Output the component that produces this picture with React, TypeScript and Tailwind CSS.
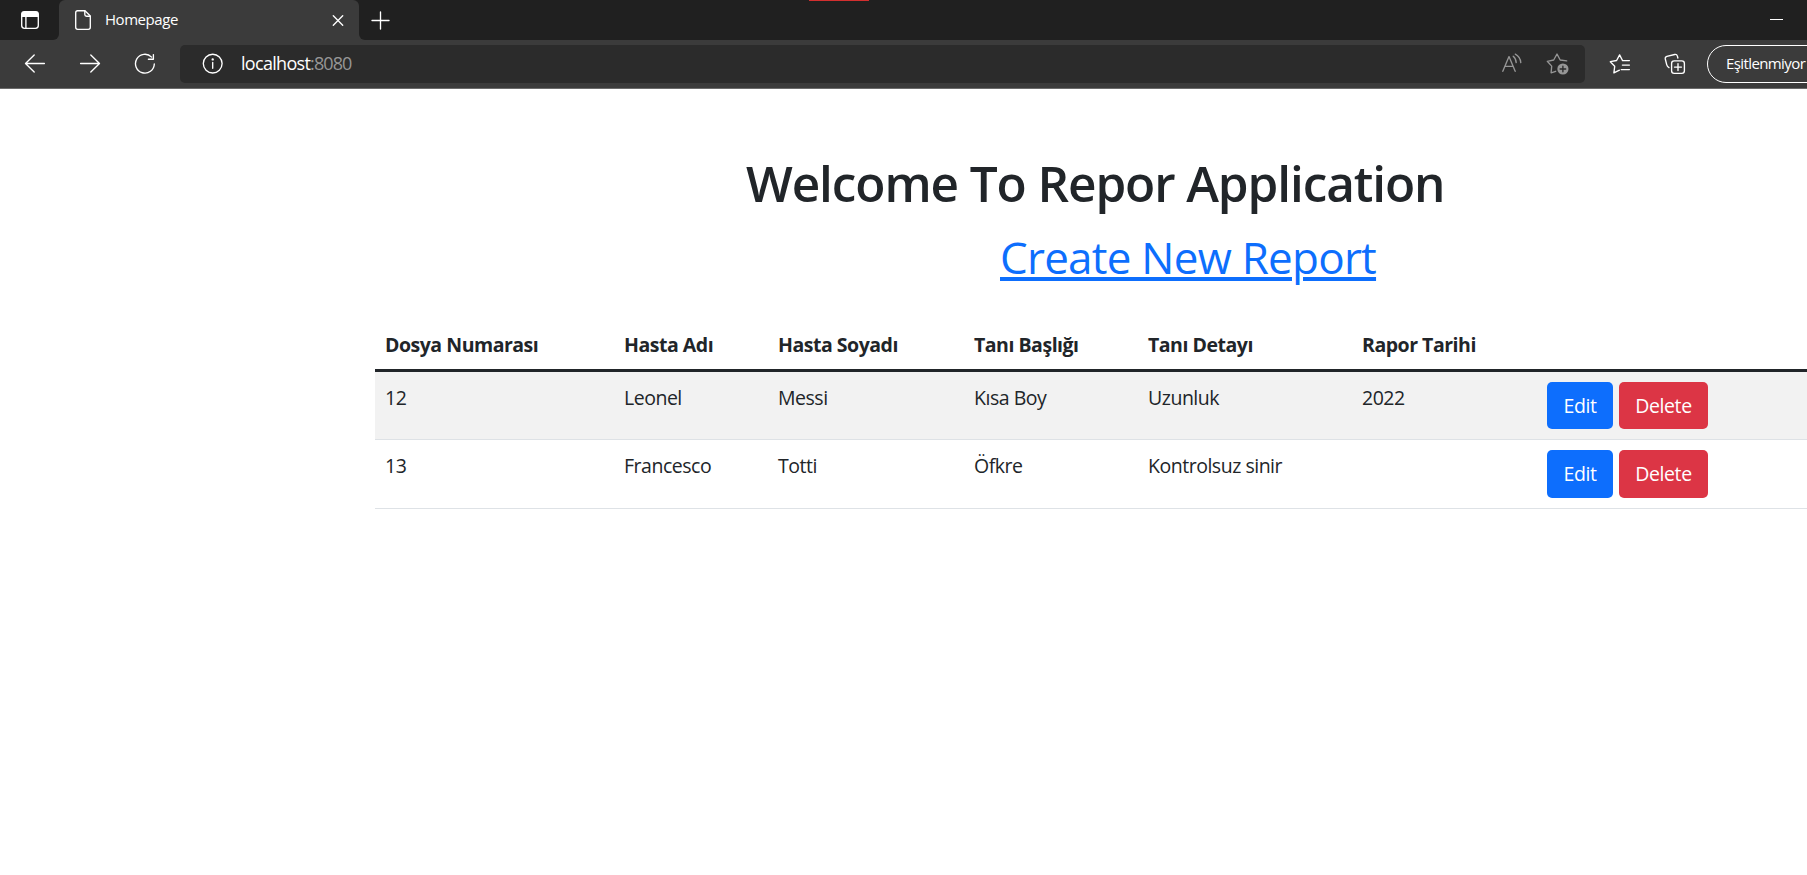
import type { ReactNode } from 'react';

type Report = {
  id: string;
  name: string;
  surname: string;
  title: string;
  detail: string;
  date: string;
};

const reports: Report[] = [
  { id: '12', name: 'Leonel', surname: 'Messi', title: 'Kısa Boy', detail: 'Uzunluk', date: '2022' },
  { id: '13', name: 'Francesco', surname: 'Totti', title: 'Öfkre', detail: 'Kontrolsuz sinir', date: '' },
];

const headers = ['Dosya Numarası', 'Hasta Adı', 'Hasta Soyadı', 'Tanı Başlığı', 'Tanı Detayı', 'Rapor Tarihi', ''];

function Icon({ children, className, box = '0 0 22 22' }: { children: ReactNode; className: string; box?: string }) {
  return (
    <svg
      viewBox={box}
      className={`shrink-0 ${className}`}
      fill="none"
      stroke="currentColor"
      strokeWidth="1.35"
      strokeLinecap="round"
      strokeLinejoin="round"
    >
      {children}
    </svg>
  );
}

function TabStrip() {
  return (
    <div className="flex h-10 bg-[#202020] text-white">
      <div className="w-[59px] bg-[#3b3b3b]">
        <div className="flex h-10 items-center rounded-br-md bg-[#202020] pl-5">
          <Icon className="size-5" box="0 0 20 20">
            <rect x="1.7" y="1.7" width="16.6" height="16.6" rx="2.8" />
            <path d="M1.5 7V4.2Q1.5 1.5 4.2 1.5H15.8Q18.5 1.5 18.5 4.2V7Z" fill="currentColor" stroke="none" />
            <path d="M5.9 7V18" />
          </Icon>
        </div>
      </div>
      <div className="w-[300px] bg-[#202020]">
        <div className="flex h-10 items-center rounded-t-md bg-[#3b3b3b] pr-[15px] pl-[13px]">
          <Icon className="size-[22px]">
            <path d="M5.2 1.7H13L18.3 7V18.3Q18.3 20.3 16.3 20.3H5.7Q3.7 20.3 3.7 18.3V3.7Q3.7 1.7 5.7 1.7Z" />
            <path d="M12.8 1.9V5.4Q12.8 7.2 14.6 7.2H18.1" />
          </Icon>
          <span className="ml-[11px] pb-0.5 text-[15px] leading-5 tracking-[-0.45px]">Homepage</span>
          <Icon className="ml-auto size-3" box="0 0 12 12">
            <path d="M1.3 1.8L10.7 11.2M10.7 1.8L1.3 11.2" />
          </Icon>
        </div>
      </div>
      <div className="grow bg-[#3b3b3b]">
        <div className="flex h-10 items-center rounded-bl-md bg-[#202020] pl-3">
          <Icon className="size-[19px]" box="0 0 19 19">
            <path d="M9.5 1V18M1 9.5H18" />
          </Icon>
          <div className="ml-[419px] h-px w-[60px] self-start bg-[#d32f2f]" />
          <div className="mr-6 mb-px ml-auto h-px w-[13px] bg-white" />
        </div>
      </div>
    </div>
  );
}

function Toolbar() {
  return (
    <div className="flex h-[49px] items-start overflow-hidden border-b border-[#6b6b6b] bg-[#3b3b3b] pt-[5px] text-white">
      <div className="flex h-[38px] w-[180px] shrink-0 items-center gap-[33px] pl-6">
        <Icon className="size-[22px]">
          <path d="M1.6 10.5H20.4M10.2 1.9L1.5 10.5L10.2 19.1" />
        </Icon>
        <Icon className="size-[22px]">
          <path d="M1.6 10.5H20.4M11.8 1.9L20.5 10.5L11.8 19.1" />
        </Icon>
        <Icon className="size-[22px]">
          <path d="M17.6 4.1A9.4 9.4 0 1 0 20.3 10.9M19.4 1.6V6.2H14.4" />
        </Icon>
      </div>
      <div className="flex h-[38px] w-[1405px] shrink-0 items-center rounded-[5px] bg-[#2b2b2b] pr-[15px] pl-[22px]">
        <Icon className="size-[22px]">
          <circle cx="10.7" cy="10.6" r="9.4" />
          <path d="M10.7 9.5V15.3" />
          <circle cx="10.7" cy="6.4" r="0.5" fill="currentColor" />
        </Icon>
        <span className="ml-[17px] pb-0.5 text-[18px] leading-6 tracking-[-0.7px]">localhost</span>
        <span className="pb-0.5 text-[18px] leading-6 tracking-[-0.9px] text-[#969696]">:8080</span>
        <div className="ml-auto flex items-center gap-[23px] text-[#969696]">
          <Icon className="size-[22px]">
            <path d="M1.8 18.3L8 3.6L14.2 18.3M3.9 13.4H12.1" />
            <path d="M12.2 3.2Q15 5.4 15.2 9.6M14.3 1.2Q19.3 4 19.8 9.6" />
          </Icon>
          <Icon className="size-6" box="0 0 24 24">
            <path d="M9.7 19.3L5.1 20.8L5.7 14.1L1.3 9.3L7.7 8L11 2L14.2 8L20.7 8.9" />
            <circle cx="16.9" cy="17" r="5.6" fill="currentColor" stroke="none" />
            <path d="M16.9 14.2V19.8M14.1 17H19.7" stroke="#2b2b2b" />
          </Icon>
        </div>
      </div>
      <div className="flex h-[38px] shrink-0 items-center gap-[33px] pl-6">
        <Icon className="size-[22px]">
          <path d="M10.4 17.2L4.9 19.9L5.7 13.3L1.3 8.7L7.6 7.5L10.6 1.9L13.4 7.3M13.4 7.6H20.4M13.4 12.1H20.4M12.2 16.6H20.4" />
        </Icon>
        <Icon className="size-[22px]">
          <rect x="7.6" y="7.8" width="12.8" height="12.6" rx="2.6" />
          <path d="M14 10.6V17.6M10.5 14.1H17.5" />
          <path d="M5 14.6Q3.2 13.6 2.7 11.6L1.3 6Q0.9 4 2.9 3.4L10.7 1.5Q12.8 1.1 13.4 3.1L13.9 5" />
        </Icon>
      </div>
      <div className="ml-[21px] flex h-[38px] w-[180px] shrink-0 items-center rounded-full border-[1.5px] border-white pl-[18px]">
        <span className="pb-0.5 text-[15px] leading-5 tracking-[-0.6px]">Eşitlenmiyor</span>
      </div>
    </div>
  );
}

function ReportTable() {
  const cell = 'border-b border-[#dee2e6] px-[10px] pt-[11px] align-top';
  return (
    <table className="w-full table-fixed border-separate border-spacing-0 text-left text-[19.5px] leading-[30px] tracking-[-0.48px]">
      <colgroup>
        <col className="w-[239px]" />
        <col className="w-[154px]" />
        <col className="w-[196px]" />
        <col className="w-[174px]" />
        <col className="w-[214px]" />
        <col className="w-[184px]" />
        <col />
      </colgroup>
      <thead>
        <tr className="h-[52px]">
          {headers.map((h, i) => (
            <th key={i} className="border-b-3 border-[#212529] px-[10px] pt-[10px] align-top font-bold">
              {h}
            </th>
          ))}
        </tr>
      </thead>
      <tbody>
        {reports.map((r) => (
          <tr key={r.id} className="group h-[68px] odd:bg-[#f2f2f2] even:h-[69px]">
            <td className={cell}>{r.id}</td>
            <td className={cell}>{r.name}</td>
            <td className={cell}>{r.surname}</td>
            <td className={cell}>{r.title}</td>
            <td className={cell}>{r.detail}</td>
            <td className={cell}>{r.date}</td>
            <td className="border-b border-[#dee2e6] px-[11px] py-[10px] align-top">
              <div className="flex h-[47px] gap-[6px] tracking-[-0.4px] text-white group-even:h-12">
                <a className="flex w-[66px] items-center justify-center rounded-[5px] bg-[#0d6efd]">Edit</a>
                <a className="flex w-[89px] items-center justify-center rounded-[5px] bg-[#dc3545]">Delete</a>
              </div>
            </td>
          </tr>
        ))}
      </tbody>
    </table>
  );
}

export default function App() {
  return (
    <div className="h-[875px] w-full overflow-hidden bg-white font-['Open_Sans','Noto_Sans',sans-serif] text-[#212529]">
      <TabStrip />
      <Toolbar />
      <main className="flex flex-col pt-[64px] pl-[375px]">
        <h1 className="ml-[371px] text-[49.5px] leading-[60px] font-semibold tracking-[-1.1px] whitespace-nowrap">
          Welcome To Repor Application
        </h1>
        <a className="mt-[10px] ml-[625px] self-start text-[44px] leading-[68px] tracking-[-0.76px] whitespace-nowrap text-[#0d6efd] underline decoration-4 underline-offset-[3px]">
          Create New Report
        </a>
        <div className="mt-[29px]">
          <ReportTable />
        </div>
      </main>
    </div>
  );
}
